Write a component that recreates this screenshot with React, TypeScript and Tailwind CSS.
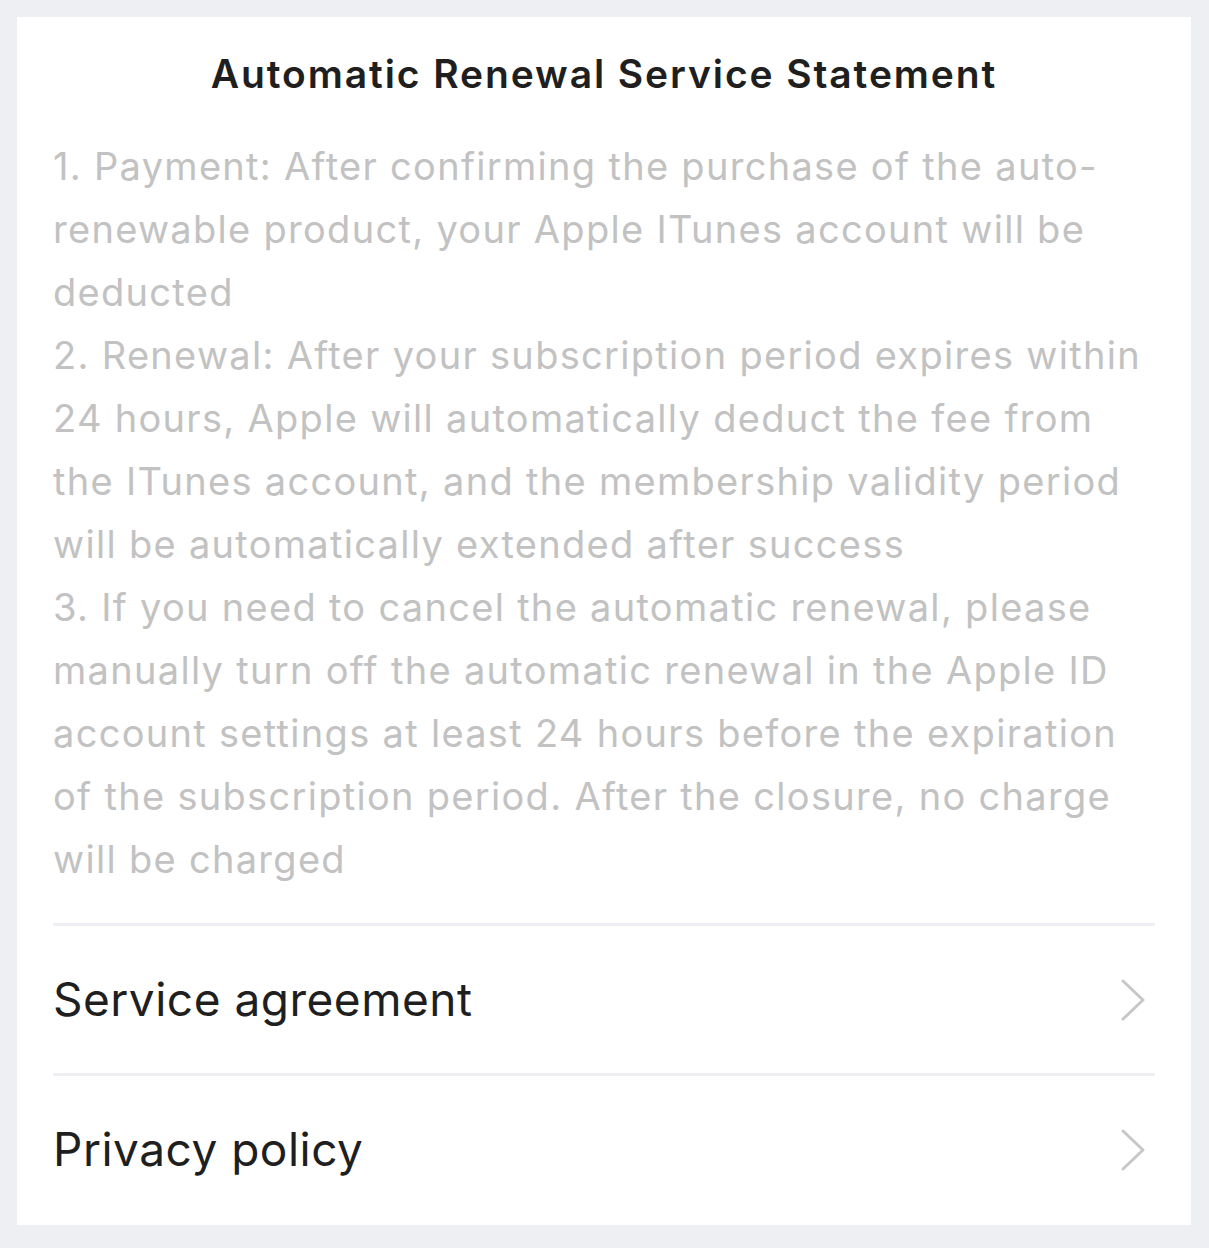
import React from 'react'

const lines1 = [
  '1. Payment: After confirming the purchase of the auto-',
  'renewable product, your Apple ITunes account will be',
  'deducted',
  '2. Renewal: After your subscription period expires within',
  '24 hours, Apple will automatically deduct the fee from',
  'the ITunes account, and the membership validity period',
  'will be automatically extended after success',
  '3. If you need to cancel the automatic renewal, please',
  'manually turn off the automatic renewal in the Apple ID',
  'account settings at least 24 hours before the expiration',
  'of the subscription period. After the closure, no charge',
  'will be charged',
]

const Chevron = () => (
  <svg width="26" height="44" viewBox="0 0 26 44" fill="none">
    <path d="M3 3 L23 22 L3 41" stroke="#c7c7c9" strokeWidth="3" strokeLinecap="round" strokeLinejoin="round" />
  </svg>
)

const LinkRow = ({ label }: { label: string }) => (
  <div className="flex items-center justify-between h-[150px] border-t-[3px] border-[#eeeff3]">
    <span className="text-[46px] text-[#1f1f1f] tracking-[0.5px]">{label}</span>
    <div className="mr-[9px]">
      <Chevron />
    </div>
  </div>
)

export default function App() {
  return (
    <div className="min-h-[1248px] bg-[#eeeff3] p-[17px] pr-[18px]" style={{ fontFamily: 'Inter, "Noto Sans", sans-serif' }}>
      <div className="bg-white px-9 pt-[31px] pb-[2px]">
        <h1 className="text-center text-[39px] font-semibold leading-[52px] tracking-[1.9px] text-[#1f1f1f]">
          Automatic Renewal Service Statement
        </h1>
        <div className="mt-[35px] pb-[32px] text-[38px] leading-[63px] tracking-[1.3px] text-[#c2c2c2]">
          {lines1.map((l) => (
            <div key={l} className="whitespace-nowrap">{l}</div>
          ))}
        </div>
        <LinkRow label="Service agreement" />
        <LinkRow label="Privacy policy" />
      </div>
    </div>
  )
}
